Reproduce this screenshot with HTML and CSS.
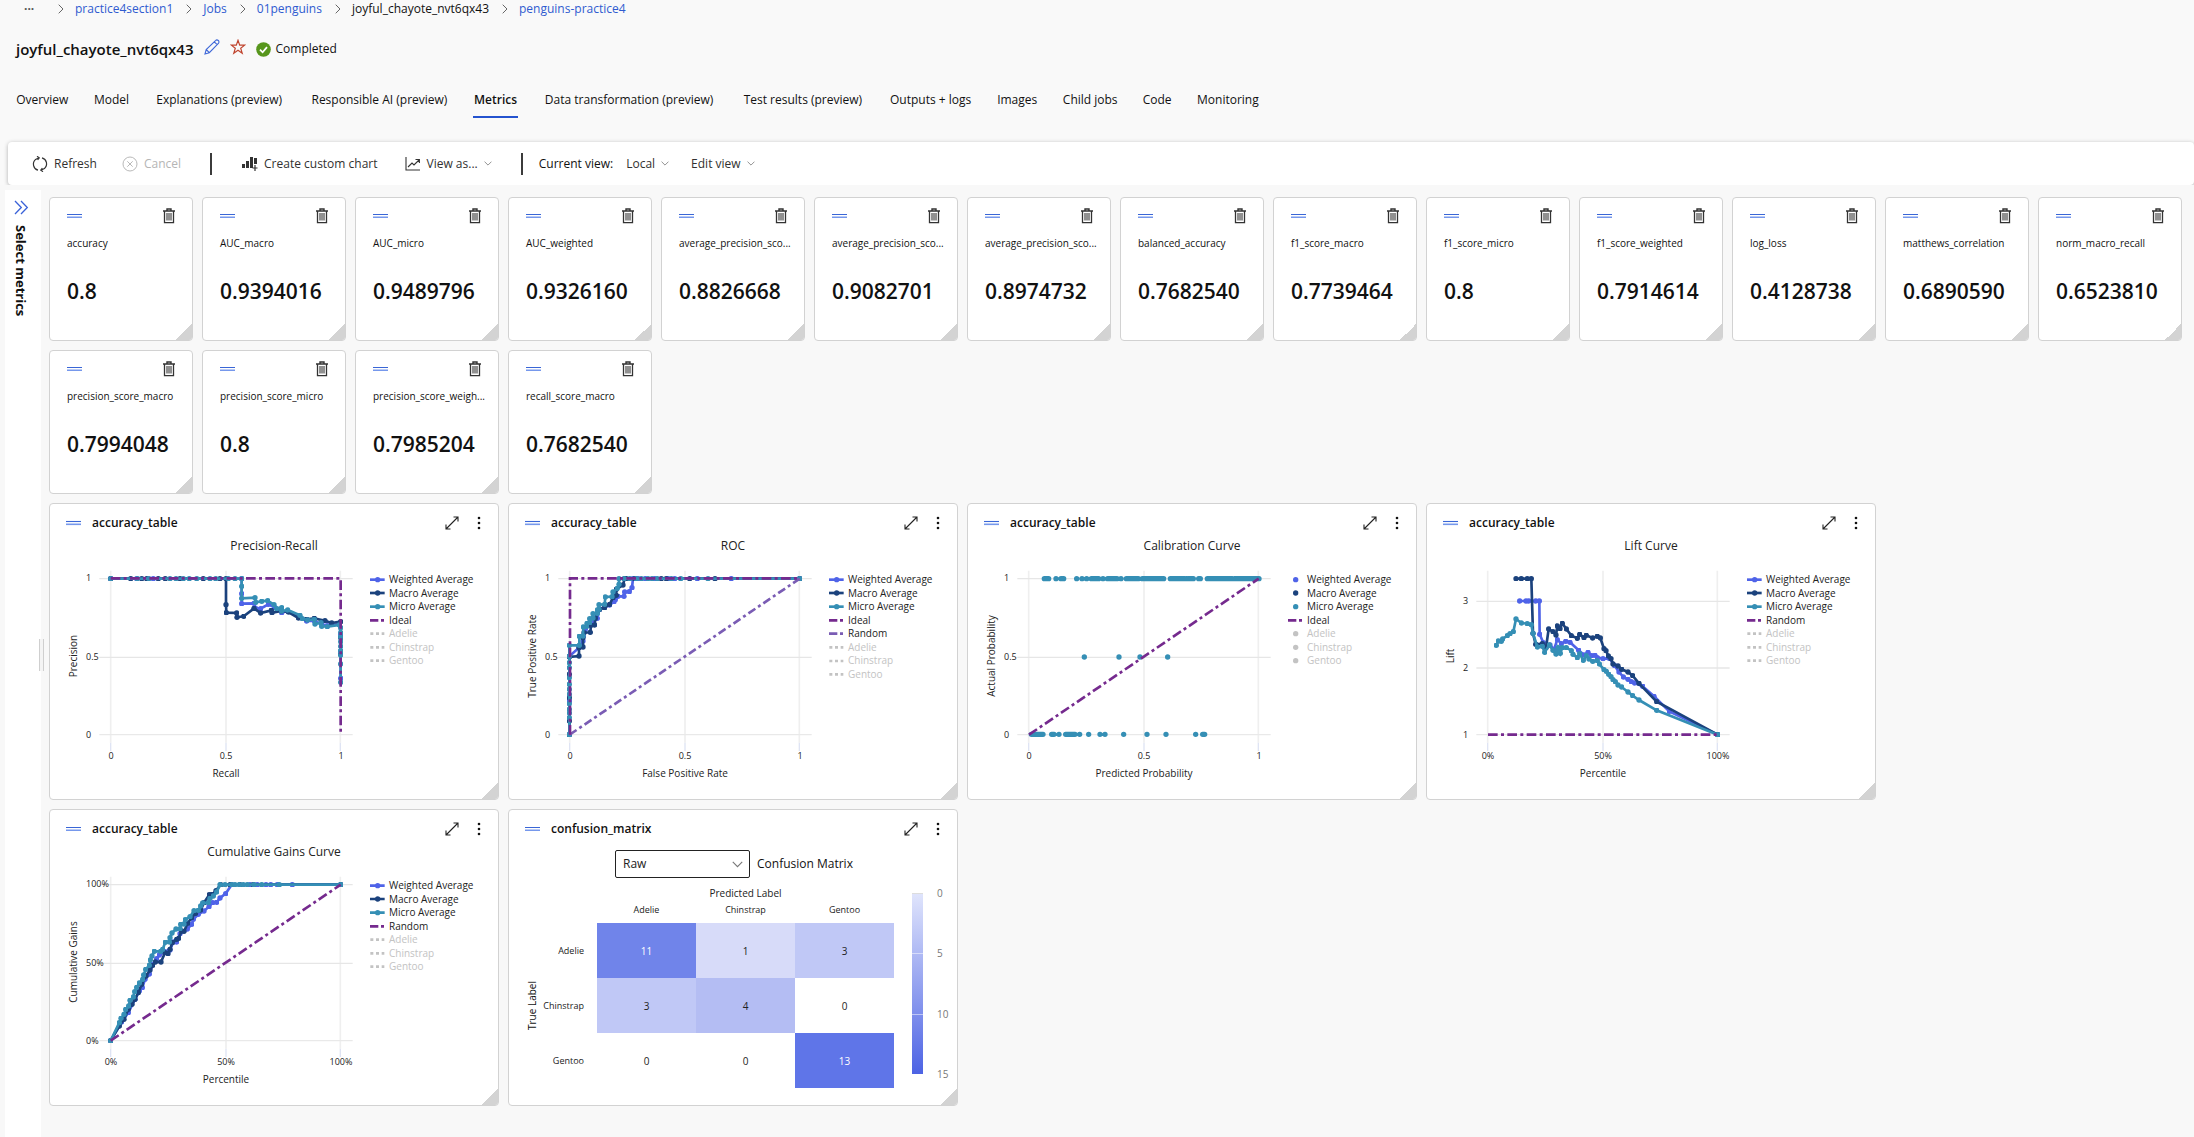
FILE: index.html
```html
<!DOCTYPE html>
<html lang="en">
<head>
<meta charset="utf-8">
<title>joyful_chayote_nvt6qx43 - Metrics</title>
<link rel="stylesheet" href="styles.css">
</head>
<body>
<svg class="defs" aria-hidden="true">
  <defs>
    <marker id="dot-weighted" viewBox="-8 -8 16 16" markerWidth="16" markerHeight="16" markerUnits="userSpaceOnUse"><circle r="8" fill="#4f63e8"/></marker>
    <marker id="dot-macro" viewBox="-8 -8 16 16" markerWidth="16" markerHeight="16" markerUnits="userSpaceOnUse"><circle r="8" fill="#1b427d"/></marker>
    <marker id="dot-micro" viewBox="-8 -8 16 16" markerWidth="16" markerHeight="16" markerUnits="userSpaceOnUse"><circle r="8" fill="#358fb5"/></marker>
    <symbol id="handle" viewBox="0 0 15 6"><path d="M0 1.500h15" stroke="#3a66d6" stroke-width="1.100"/><path d="M0 4.300h15" stroke="#7698ec" stroke-width="1.600"/></symbol>
    <symbol id="trash" viewBox="0 0 12 16"><path d="M0 3h12M4 2.6V1h4v1.6" fill="none" stroke="#333" stroke-width="1.4"/><path d="M1.5 3v11.6h9V3" fill="none" stroke="#333" stroke-width="1.3"/><path d="M4 5v7.5M6 5v7.5M8 5v7.5" stroke="#222" stroke-width="1"/></symbol>
    <symbol id="expand" viewBox="0 0 14 14"><path d="M1 13L13 1M8.5 1H13v4.500M5.500 13H1V8.500" fill="none" stroke="#222" stroke-width="1.1"/></symbol>
    <symbol id="more" viewBox="0 0 4 14"><g fill="#111"><circle cx="2" cy="2" r="1.3"/><circle cx="2" cy="7" r="1.3"/><circle cx="2" cy="12" r="1.3"/></g></symbol>
    <symbol id="chev-right" viewBox="0 0 6 10"><path d="M.7.7L5 5 .7 9.300" fill="none" stroke="#666" stroke-width="1"/></symbol>
    <symbol id="chev-down" viewBox="0 0 10 6"><path d="M.7.7L5 5 9.300.7" fill="none" stroke="#777" stroke-width="1"/></symbol>
    <g id="grid" fill="none">
      <path d="M182 209V725M528 209V725M871 209V725" stroke="#efefef" stroke-width="5"/>
      <path d="M182 725v25M528 725v25M871 725v25" stroke="#dfe4f4" stroke-width="4"/>
      <path d="M148 701H908" stroke="#e9e9e9" stroke-width="4"/>
    </g>
    <g id="rows-half"><path d="M148 233H908M148 469H908" stroke="#e6e6e6" stroke-width="4"/></g>
    <g id="key-lines">
      <path d="M960 236h44" stroke="#4f63e8" stroke-width="8"/><circle cx="983" cy="236" r="8" fill="#4f63e8"/>
      <path d="M960 276h44" stroke="#1b427d" stroke-width="8"/><circle cx="983" cy="276" r="8" fill="#1b427d"/>
      <path d="M960 317h44" stroke="#358fb5" stroke-width="8"/><circle cx="983" cy="317" r="8" fill="#358fb5"/>
      <path d="M960 358h42" stroke="#752a8e" stroke-width="8" stroke-dasharray="25 8 9 8"/>
    </g>
    <g id="key-off"><path d="M961 398h42M961 439h42M961 479h42" stroke="#c3c3c3" stroke-width="8" stroke-dasharray="9 8"/></g>
  </defs>
</svg>

<header class="top">
  <nav aria-label="Breadcrumb">
    <ol class="crumbs">
      <li><button class="dots" aria-label="More">···</button></li>
      <li><svg class="sep"><use href="#chev-right"/></svg><a href="#">practice4section1</a></li>
      <li><svg class="sep"><use href="#chev-right"/></svg><a href="#">Jobs</a></li>
      <li><svg class="sep"><use href="#chev-right"/></svg><a href="#">01penguins</a></li>
      <li><svg class="sep"><use href="#chev-right"/></svg><span>joyful_chayote_nvt6qx43</span></li>
      <li><svg class="sep"><use href="#chev-right"/></svg><a href="#">penguins-practice4</a></li>
    </ol>
  </nav>
  <div class="heading">
    <h1>joyful_chayote_nvt6qx43</h1>
    <button class="icon-btn" aria-label="Edit name"><svg width="16" height="16" viewBox="0 0 16 16" fill="none" stroke="#3f68d8" stroke-width="1.1"><path d="M1 15l1.200-4.500L11.500 1.600a1.900 1.900 0 0 1 2.900 2.700L5.300 13.700zM10.300 2.800l2.900 2.800M2.200 10.500l3.100 3.200"/></svg></button>
    <button class="icon-btn" aria-label="Favorite"><svg width="16" height="16" viewBox="0 0 16 16" fill="none" stroke="#c0452f" stroke-width="1.200"><path d="M8 1.300l1.700 4.800h5l-4 3.100 1.500 5L8 11.200l-4.200 3 1.500-5-4-3.100h5z"/></svg></button>
    <span class="status"><svg width="15" height="15" viewBox="0 0 15 15"><circle cx="7.500" cy="7.500" r="7.300" fill="#57961c"/><path d="M4 7.700l2.600 2.600L11 5.200" fill="none" stroke="#fff" stroke-width="1.800"/></svg>Completed</span>
  </div>
  <nav class="tabs" aria-label="Job sections">
    <a href="#" data-label="Overview">Overview</a>
    <a href="#" data-label="Model">Model</a>
    <a href="#" data-label="Explanations (preview)">Explanations (preview)</a>
    <a href="#" data-label="Responsible AI (preview)">Responsible AI (preview)</a>
    <a href="#" data-label="Metrics" class="current" aria-current="page">Metrics</a>
    <a href="#" data-label="Data transformation (preview)">Data transformation (preview)</a>
    <a href="#" data-label="Test results (preview)">Test results (preview)</a>
    <a href="#" data-label="Outputs + logs">Outputs + logs</a>
    <a href="#" data-label="Images">Images</a>
    <a href="#" data-label="Child jobs">Child jobs</a>
    <a href="#" data-label="Code">Code</a>
    <a href="#" data-label="Monitoring">Monitoring</a>
  </nav>
</header>

<div class="toolbar" role="toolbar" aria-label="Metrics commands">
  <button class="cmd refresh"><svg width="16" height="16" viewBox="0 0 16 16" fill="none" stroke="#333" stroke-width="1.200"><path d="M6 14.200A6.300 6.300 0 0 1 3.600 3.400L7 1.800M10 1.800a6.300 6.300 0 0 1 2.400 10.800L9 14.200"/><path d="M5 .3l2.200 1.500L5.600 4M11 15.700l-2.200-1.500 1.600-2.200"/></svg>Refresh</button>
  <button class="cmd cancel" disabled><svg width="16" height="16" viewBox="0 0 16 16" fill="none" stroke="#b9b9b9" stroke-width="1"><circle cx="8" cy="8" r="7"/><path d="M5.300 5.300l5.400 5.400M10.700 5.300l-5.400 5.400"/></svg>Cancel</button>
  <span class="rule"></span>
  <button class="cmd create"><svg width="16" height="16" viewBox="0 0 16 16"><path d="M0 8h3v4H0zM4 5h3v7H4zM8 1h3v11H8zM12 2h3v6h-3z" fill="#333"/><path d="M13 9v6M10.500 12h5" stroke="#333" stroke-width="1.200"/></svg>Create custom chart</button>
  <button class="cmd view-as"><svg width="16" height="16" viewBox="0 0 16 16" fill="none" stroke="#333" stroke-width="1.100"><path d="M1 1v13h14M3 11l4-4 2 2 5-5M10.500 3.500H14.400V7"/></svg>View as...<svg class="down"><use href="#chev-down"/></svg></button>
  <span class="rule"></span>
  <span class="current-view">Current view:</span>
  <button class="cmd local">Local<svg class="down"><use href="#chev-down"/></svg></button>
  <button class="cmd">Edit view<svg class="down"><use href="#chev-down"/></svg></button>
</div>

<div class="body">
  <aside class="side">
    <button aria-label="Expand"><svg width="15" height="15" viewBox="0 0 15 15" fill="none" stroke="#3a62d8" stroke-width="1.300"><path d="M1 1l6.300 6.500L1 14M7 1l6.300 6.500L7 14"/></svg></button>
    <h2>Select metrics</h2>
    <span class="grip"></span>
  </aside>
  <main>
    <section class="grid" aria-label="Metric values">
      <article class="card metric"><div class="bar"><svg class="handle"><use href="#handle"/></svg><button aria-label="Delete"><svg class="trash"><use href="#trash"/></svg></button></div><h3>accuracy</h3><p>0.8</p></article>
      <article class="card metric"><div class="bar"><svg class="handle"><use href="#handle"/></svg><button aria-label="Delete"><svg class="trash"><use href="#trash"/></svg></button></div><h3>AUC_macro</h3><p>0.9394016</p></article>
      <article class="card metric"><div class="bar"><svg class="handle"><use href="#handle"/></svg><button aria-label="Delete"><svg class="trash"><use href="#trash"/></svg></button></div><h3>AUC_micro</h3><p>0.9489796</p></article>
      <article class="card metric"><div class="bar"><svg class="handle"><use href="#handle"/></svg><button aria-label="Delete"><svg class="trash"><use href="#trash"/></svg></button></div><h3>AUC_weighted</h3><p>0.9326160</p></article>
      <article class="card metric"><div class="bar"><svg class="handle"><use href="#handle"/></svg><button aria-label="Delete"><svg class="trash"><use href="#trash"/></svg></button></div><h3>average_precision_sco...</h3><p>0.8826668</p></article>
      <article class="card metric"><div class="bar"><svg class="handle"><use href="#handle"/></svg><button aria-label="Delete"><svg class="trash"><use href="#trash"/></svg></button></div><h3>average_precision_sco...</h3><p>0.9082701</p></article>
      <article class="card metric"><div class="bar"><svg class="handle"><use href="#handle"/></svg><button aria-label="Delete"><svg class="trash"><use href="#trash"/></svg></button></div><h3>average_precision_sco...</h3><p>0.8974732</p></article>
      <article class="card metric"><div class="bar"><svg class="handle"><use href="#handle"/></svg><button aria-label="Delete"><svg class="trash"><use href="#trash"/></svg></button></div><h3>balanced_accuracy</h3><p>0.7682540</p></article>
      <article class="card metric"><div class="bar"><svg class="handle"><use href="#handle"/></svg><button aria-label="Delete"><svg class="trash"><use href="#trash"/></svg></button></div><h3>f1_score_macro</h3><p>0.7739464</p></article>
      <article class="card metric"><div class="bar"><svg class="handle"><use href="#handle"/></svg><button aria-label="Delete"><svg class="trash"><use href="#trash"/></svg></button></div><h3>f1_score_micro</h3><p>0.8</p></article>
      <article class="card metric"><div class="bar"><svg class="handle"><use href="#handle"/></svg><button aria-label="Delete"><svg class="trash"><use href="#trash"/></svg></button></div><h3>f1_score_weighted</h3><p>0.7914614</p></article>
      <article class="card metric"><div class="bar"><svg class="handle"><use href="#handle"/></svg><button aria-label="Delete"><svg class="trash"><use href="#trash"/></svg></button></div><h3>log_loss</h3><p>0.4128738</p></article>
      <article class="card metric"><div class="bar"><svg class="handle"><use href="#handle"/></svg><button aria-label="Delete"><svg class="trash"><use href="#trash"/></svg></button></div><h3>matthews_correlation</h3><p>0.6890590</p></article>
      <article class="card metric"><div class="bar"><svg class="handle"><use href="#handle"/></svg><button aria-label="Delete"><svg class="trash"><use href="#trash"/></svg></button></div><h3>norm_macro_recall</h3><p>0.6523810</p></article>
      <article class="card metric"><div class="bar"><svg class="handle"><use href="#handle"/></svg><button aria-label="Delete"><svg class="trash"><use href="#trash"/></svg></button></div><h3>precision_score_macro</h3><p>0.7994048</p></article>
      <article class="card metric"><div class="bar"><svg class="handle"><use href="#handle"/></svg><button aria-label="Delete"><svg class="trash"><use href="#trash"/></svg></button></div><h3>precision_score_micro</h3><p>0.8</p></article>
      <article class="card metric"><div class="bar"><svg class="handle"><use href="#handle"/></svg><button aria-label="Delete"><svg class="trash"><use href="#trash"/></svg></button></div><h3>precision_score_weigh...</h3><p>0.7985204</p></article>
      <article class="card metric"><div class="bar"><svg class="handle"><use href="#handle"/></svg><button aria-label="Delete"><svg class="trash"><use href="#trash"/></svg></button></div><h3>recall_score_macro</h3><p>0.7682540</p></article>
    </section>

    <section class="grid" aria-label="Charts">
      <article class="card chart">
        <div class="bar"><svg class="handle"><use href="#handle"/></svg><h3>accuracy_table</h3><button aria-label="Expand chart"><svg class="expand"><use href="#expand"/></svg></button><button aria-label="More options"><svg class="more"><use href="#more"/></svg></button></div>
        <svg class="plot" viewBox="0 0 448 262" role="img" aria-label="Precision-Recall">
          <text class="t" x="224" y="13">Precision-Recall</text>
          <svg width="448" height="262" viewBox="0 108 1344 786" fill="none" stroke-width="8">
            <use href="#grid"/><use href="#rows-half"/><use href="#key-lines"/><use href="#key-off"/>
            <polyline class="weighted" points="182,233 260,233 310,233 575,233 575,278 575,308 612,307 618,323 632,323 655,310 675,320 695,335 713,330 750,350 770,360 793,360 815,370 832,374 868,370 872,400 872,450 872,532"/>
            <polyline class="macro" points="182,233 242,233 275,233 290,233 325,233 346,233 390,233 460,233 510,233 528,233 528,311 529,335 560,336 561,349 581,346 612,322 632,336 664,328 666,335 695,330 715,333 745,351 770,355 793,352 825,359 845,366 872,362 872,410 872,460"/>
            <polyline class="micro" points="182,233 262,233 297,233 360,233 378,233 400,233 418,233 440,233 480,233 497,233 535,233 555,233 575,233 575,256 575,292 615,290 617,304 635,301 653,299 672,311 680,323 695,320 695,330 713,327 750,343 757,353 773,357 793,355 795,369 813,365 815,376 832,377 868,372 872,380 872,395 872,408 872,422 872,436 872,450 872,462 872,489 872,544"/>
            <path class="ideal" d="M182 232H872V701"/>
          </svg>
          <g class="k"><text x="339" y="46">Weighted Average</text><text x="339" y="60">Macro Average</text><text x="339" y="73">Micro Average</text><text x="339" y="87">Ideal</text></g>
          <g class="k off"><text x="339" y="100">Adelie</text><text x="339" y="114">Chinstrap</text><text x="339" y="127">Gentoo</text></g>
          <g class="y"><text x="36" y="44">1</text><text x="36" y="123">0.5</text><text x="36" y="201">0</text></g>
          <g class="x"><text x="61" y="222">0</text><text x="176" y="222">0.5</text><text x="291" y="222">1</text></g>
          <text class="a" x="176" y="240">Recall</text>
          <text class="a" transform="translate(27 119) rotate(-90)">Precision</text>
        </svg>
      </article>

      <article class="card chart">
        <div class="bar"><svg class="handle"><use href="#handle"/></svg><h3>accuracy_table</h3><button aria-label="Expand chart"><svg class="expand"><use href="#expand"/></svg></button><button aria-label="More options"><svg class="more"><use href="#more"/></svg></button></div>
        <svg class="plot" viewBox="0 0 448 262" role="img" aria-label="ROC">
          <text class="t" x="224" y="13">ROC</text>
          <svg width="448" height="262" viewBox="0 108 1344 786" fill="none" stroke-width="8">
            <use href="#grid"/><use href="#rows-half"/><use href="#key-lines"/>
            <path d="M960 398h42" stroke="#7a5cb4" stroke-dasharray="25 8 9 8"/>
            <g transform="translate(0 41)"><use href="#key-off"/></g>
            <g transform="translate(-3 0)">
              <polyline class="weighted" points="184,701 184,600 184,466 213,440 225,420 226,405 232,385 245,372 250,362 268,352 268,338 275,325 290,318 305,312 318,302 322,296 330,286 348,286 350,273 364,272 372,260 375,233 390,233 412,233 440,233 480,233 500,233 568,233 670,233 875,233"/>
              <polyline class="macro" points="184,701 184,660 184,590 184,520 184,468 213,465 213,440 225,438 225,410 228,395 247,394 249,373 260,372 262,352 275,325 290,320 305,310 315,290 325,283 325,265 345,252 350,233 355,233 380,233 460,233 475,233 545,233 621,233 875,233"/>
              <polyline class="micro" points="184,701 184,650 184,636 184,625 184,608 184,580 184,565 184,550 184,530 184,500 184,485 184,466 184,433 214,433 214,406 225,405 226,378 236,376 237,367 245,365 245,353 255,351 255,338 268,337 268,327 273,325 273,311 290,310 292,288 312,287 315,273 328,262 333,250 333,233 348,233 365,233 385,233 400,233 420,233 432,233 448,233 490,233 518,233 600,233 875,233"/>
              <path d="M185 701L875 233" stroke="#7a5cb4" stroke-dasharray="25 10 9 10"/>
              <path class="ideal" d="M186 701V232H875"/>
            </g>
          </svg>
          <g class="k"><text x="339" y="46">Weighted Average</text><text x="339" y="60">Macro Average</text><text x="339" y="73">Micro Average</text><text x="339" y="87">Ideal</text><text x="339" y="100">Random</text></g>
          <g class="k off"><text x="339" y="114">Adelie</text><text x="339" y="127">Chinstrap</text><text x="339" y="141">Gentoo</text></g>
          <g class="y"><text x="36" y="44">1</text><text x="36" y="123">0.5</text><text x="36" y="201">0</text></g>
          <g class="x"><text x="61" y="222">0</text><text x="176" y="222">0.5</text><text x="291" y="222">1</text></g>
          <text class="a" x="176" y="240">False Positive Rate</text>
          <text class="a" transform="translate(27 119) rotate(-90)">True Positive Rate</text>
        </svg>
      </article>

      <article class="card chart">
        <div class="bar"><svg class="handle"><use href="#handle"/></svg><h3>accuracy_table</h3><button aria-label="Expand chart"><svg class="expand"><use href="#expand"/></svg></button><button aria-label="More options"><svg class="more"><use href="#more"/></svg></button></div>
        <svg class="plot" viewBox="0 0 448 262" role="img" aria-label="Calibration Curve">
          <text class="t" x="224" y="13">Calibration Curve</text>
          <svg width="448" height="262" viewBox="0 108 1344 786" fill="none" stroke-width="8">
            <use href="#grid"/><use href="#rows-half"/>
            <circle cx="983" cy="236" r="8" fill="#4f63e8"/><circle cx="983" cy="276" r="8" fill="#1b427d"/><circle cx="983" cy="317" r="8" fill="#358fb5"/>
            <path d="M960 358h42" stroke="#752a8e" stroke-dasharray="25 8 9 8"/>
            <g fill="#c3c3c3"><circle cx="983" cy="398" r="8"/><circle cx="983" cy="439" r="8"/><circle cx="983" cy="479" r="8"/></g>
            <g transform="translate(-9 0)">
              <path class="scatter" d="M238 233h13M273 233h0M288 233h8M335 233h0M351 233h0M365 233h0M379 233h22M414 233h0M428 233h28M468 233h0M484 233h36M532 233h16M555 233h41M616 233h44M668 233h17M701 233h5M727 233h28M762 233h40M808 233h40M855 233h27M358 468h0M462 468h0M525 468h0M608 468h0M199 700h35M260 700h7M282 700h0M302 700h28M344 700h0M371 700h0M405 700h0M420 700h0M476 700h0M546 700h0M603 700h0M692 700h0M713 700h6"/>
              <path class="ideal" d="M192 701L881 233"/>
            </g>
          </svg>
          <g class="k"><text x="339" y="46">Weighted Average</text><text x="339" y="60">Macro Average</text><text x="339" y="73">Micro Average</text><text x="339" y="87">Ideal</text></g>
          <g class="k off"><text x="339" y="100">Adelie</text><text x="339" y="114">Chinstrap</text><text x="339" y="127">Gentoo</text></g>
          <g class="y"><text x="36" y="44">1</text><text x="36" y="123">0.5</text><text x="36" y="201">0</text></g>
          <g class="x"><text x="61" y="222">0</text><text x="176" y="222">0.5</text><text x="291" y="222">1</text></g>
          <text class="a" x="176" y="240">Predicted Probability</text>
          <text class="a" transform="translate(27 119) rotate(-90)">Actual Probability</text>
        </svg>
      </article>

      <article class="card chart">
        <div class="bar"><svg class="handle"><use href="#handle"/></svg><h3>accuracy_table</h3><button aria-label="Expand chart"><svg class="expand"><use href="#expand"/></svg></button><button aria-label="More options"><svg class="more"><use href="#more"/></svg></button></div>
        <svg class="plot" viewBox="0 0 448 262" role="img" aria-label="Lift Curve">
          <text class="t" x="224" y="13">Lift Curve</text>
          <svg width="448" height="262" viewBox="0 108 1344 786" fill="none" stroke-width="8">
            <use href="#grid"/><path d="M148 301H908M148 501H908" stroke="#e6e6e6" stroke-width="4"/><use href="#key-lines"/><use href="#key-off"/>
            <g transform="translate(-9 0)">
              <polyline class="weighted" points="287,300 306,300 314,300 335,300 346,300 347,400 358,425 365,440 378,432 390,445 400,416 412,428 425,421 438,424 464,448 480,462 492,454 503,464 513,463 520,470 537,473 556,472 572,494 585,513 598,528 612,535 622,542 632,546 656,556 690,586 736,631 881,701"/>
              <polyline class="macro" points="276,233 292,233 310,233 322,233 327,397 335,430 355,428 366,440 374,384 387,392 396,402 400,375 408,383 415,367 427,384 442,404 460,412 467,400 480,410 487,403 506,411 520,406 529,411 540,443 546,449 553,465 561,473 567,489 582,495 593,505 612,513 626,524 645,547 698,602 881,701"/>
              <polyline class="micro" points="217,433 223,420 232,421 236,414 250,404 258,398 268,392 276,354 292,366 310,368 322,371 327,397 340,438 355,436 362,454 376,432 387,448 396,459 402,440 409,457 415,440 427,440 442,449 447,460 460,470 467,458 478,478 487,464 495,474 506,481 520,479 526,489 540,506 547,511 554,520 561,527 567,536 574,542 582,552 593,558 612,573 626,584 645,597 698,628 881,701"/>
              <path class="ideal" d="M192 701H881"/>
            </g>
          </svg>
          <g class="k"><text x="339" y="46">Weighted Average</text><text x="339" y="60">Macro Average</text><text x="339" y="73">Micro Average</text><text x="339" y="87">Random</text></g>
          <g class="k off"><text x="339" y="100">Adelie</text><text x="339" y="114">Chinstrap</text><text x="339" y="127">Gentoo</text></g>
          <g class="y"><text x="36" y="67">3</text><text x="36" y="134">2</text><text x="36" y="201">1</text></g>
          <g class="x"><text x="61" y="222">0%</text><text x="176" y="222">50%</text><text x="291" y="222">100%</text></g>
          <text class="a" x="176" y="240">Percentile</text>
          <text class="a" transform="translate(27 119) rotate(-90)">Lift</text>
        </svg>
      </article>

      <article class="card chart">
        <div class="bar"><svg class="handle"><use href="#handle"/></svg><h3>accuracy_table</h3><button aria-label="Expand chart"><svg class="expand"><use href="#expand"/></svg></button><button aria-label="More options"><svg class="more"><use href="#more"/></svg></button></div>
        <svg class="plot" viewBox="0 0 448 262" role="img" aria-label="Cumulative Gains Curve">
          <text class="t" x="224" y="13">Cumulative Gains Curve</text>
          <svg width="448" height="262" viewBox="0 108 1344 786" fill="none" stroke-width="8">
            <use href="#grid"/><use href="#rows-half"/><use href="#key-lines"/><use href="#key-off"/>
            <g transform="translate(0 -3)">
              <polyline class="weighted" points="182,704 215,648 235,620 255,580 268,555 277,545 285,520 298,504 308,475 320,458 328,447 345,437 360,432 370,408 380,408 390,383 412,369 425,355 430,340 445,325 462,315 477,302 488,290 500,289 510,276 527,263 545,236 600,236 622,236 648,236 662,236 682,236 727,236 872,236"/>
              <polyline class="macro" points="182,704 208,660 222,640 235,610 246,595 255,580 265,560 275,535 288,510 300,492 308,478 316,468 333,468 345,440 354,443 360,430 367,410 380,400 386,397 395,375 402,376 413,352 425,335 437,322 452,312 462,290 478,266 487,265 498,254 512,236 540,236 570,236 610,236 872,236"/>
              <polyline class="micro" points="182,704 208,650 213,637 222,625 227,610 236,600 240,583 250,573 254,557 260,544 268,531 278,520 281,507 287,490 298,478 301,462 306,450 313,436 332,436 338,430 346,409 358,408 360,395 366,381 378,369 390,368 392,355 402,354 406,341 420,332 432,314 445,313 452,300 458,291 475,290 480,277 490,270 500,258 510,236 525,236 545,236 555,236 568,236 580,236 592,236 612,236 635,236 688,236 872,236"/>
              <path class="ideal" d="M182 704L872 236"/>
            </g>
          </svg>
          <g class="k"><text x="339" y="46">Weighted Average</text><text x="339" y="60">Macro Average</text><text x="339" y="73">Micro Average</text><text x="339" y="87">Random</text></g>
          <g class="k off"><text x="339" y="100">Adelie</text><text x="339" y="114">Chinstrap</text><text x="339" y="127">Gentoo</text></g>
          <g class="y"><text x="36" y="44">100%</text><text x="36" y="123">50%</text><text x="36" y="201">0%</text></g>
          <g class="x"><text x="61" y="222">0%</text><text x="176" y="222">50%</text><text x="291" y="222">100%</text></g>
          <text class="a" x="176" y="240">Percentile</text>
          <text class="a" transform="translate(27 119) rotate(-90)">Cumulative Gains</text>
        </svg>
      </article>

      <article class="card chart">
        <div class="bar"><svg class="handle"><use href="#handle"/></svg><h3>confusion_matrix</h3><button aria-label="Expand chart"><svg class="expand"><use href="#expand"/></svg></button><button aria-label="More options"><svg class="more"><use href="#more"/></svg></button></div>
        <div class="cm-head">
          <div class="select"><select id="norm"><option>Raw</option><option>Normalized</option></select><svg class="down"><use href="#chev-down"/></svg></div>
          <label for="norm">Confusion Matrix</label>
        </div>
        <div class="cm-body">
          <div class="true-label"><span>True Label</span></div>
          <table>
            <thead>
              <tr class="axis"><td></td><th colspan="3">Predicted Label</th></tr>
              <tr class="names"><td></td><th>Adelie</th><th>Chinstrap</th><th>Gentoo</th></tr>
            </thead>
            <tbody>
              <tr><th>Adelie</th><td class="v11">11</td><td class="v1">1</td><td class="v3">3</td></tr>
              <tr><th>Chinstrap</th><td class="v3">3</td><td class="v4">4</td><td>0</td></tr>
              <tr><th>Gentoo</th><td>0</td><td>0</td><td class="v13">13</td></tr>
            </tbody>
          </table>
          <div class="scale"><span class="ramp"><i></i><i></i><i></i></span><ol><li>0</li><li>5</li><li>10</li><li>15</li></ol></div>
        </div>
      </article>
    </section>
  </main>
</div>
</body>
</html>
```
FILE: styles.css
```css
* { box-sizing: border-box; }
html, body { height: 100%; }
body {
  margin: 0;
  display: flex;
  flex-direction: column;
  background: #f9f9f9;
  color: #111;
  font: 12px/16px "Open Sans", "Noto Sans", sans-serif;
}
button {
  display: inline-flex;
  align-items: center;
  padding: 0;
  border: 0;
  background: none;
  color: inherit;
  font: inherit;
  cursor: pointer;
}
h1, h2, h3, p, ol { margin: 0; padding: 0; }
ol { list-style: none; }
a { color: #2f5bd0; text-decoration: none; }
svg { display: block; flex: none; }
.defs { position: absolute; width: 0; height: 0; }

/* page header */
.top { padding: 1px 16px 0; }
.crumbs { display: flex; gap: 13px; padding-left: 8px; }
.crumbs li { display: flex; align-items: center; gap: 11px; }
.crumbs .dots { width: 21px; font-weight: 700; color: #555; }
.sep { width: 6px; height: 10px; }
.heading { display: flex; align-items: center; gap: 10px; height: 24px; margin-top: 20px; }
.heading h1 { font-size: 15px; line-height: 24px; font-weight: 600; }
.icon-btn { margin-bottom: 4px; }
.status { display: flex; align-items: center; gap: 5px; }
.tabs { display: flex; gap: 22px; margin: 31px 0 0 -2px; }
.tabs a {
  display: grid;
  justify-items: center;
  height: 26px;
  padding: 0 1px;
  color: #111;
}
.tabs a::after {
  content: attr(data-label);
  height: 0;
  font-weight: 600;
  overflow: hidden;
  visibility: hidden;
}
.tabs .current { font-weight: 600; border-bottom: 2px solid #2453cf; }

/* command bar */
.toolbar {
  display: flex;
  align-items: center;
  height: 43px;
  margin: 24px 0 0 8px;
  padding-left: 24px;
  border-radius: 4px;
  background: #fff;
  box-shadow: 0 1px 4px rgba(0, 0, 0, .3);
}
.cmd { gap: 6px; margin-right: 25px; color: #323130; font-weight: 500; }
.cmd.cancel { margin-right: 29px; color: #b5b5b5; }
.cmd.create { margin-right: 27px; }
.cmd.local { margin-right: 22px; }
.view-as { margin-right: 29px; }
.down { width: 8px; height: 5px; }
.rule { width: 2px; height: 22px; margin-right: 30px; background: #3b3b3b; }
.rule ~ .rule { margin-right: 16px; }
.current-view { margin-right: 13px; }

/* work area */
.body { display: flex; flex: 1; gap: 8px; padding: 5px 12px 0 5px; background: #f8f8f8; }
.side {
  position: relative;
  display: flex;
  flex-direction: column;
  align-items: center;
  width: 36px;
  flex: none;
  padding: 10px 4px 0 0;
  background: #fff;
}
.side h2 { margin-top: 10px; font-size: 13px; line-height: 18px; font-weight: 700; writing-mode: vertical-rl; }
.grip {
  position: absolute;
  right: -3px;
  top: calc(50% - 25px);
  width: 5px;
  height: 32px;
  border: solid #cfcfcf;
  border-width: 0 1px;
  background: #f4f4f4;
}
main { flex: 1; min-width: 0; display: flex; flex-direction: column; gap: 9px; padding: 7px 0 24px; }
.grid { display: grid; grid-template-columns: repeat(auto-fill, 144px); grid-auto-rows: 144px; gap: 9px; }
.card {
  position: relative;
  border: 1px solid #d2d2d2;
  border-radius: 4px;
  background: #fff;
  overflow: hidden;
}
.card::after {
  content: "";
  position: absolute;
  right: 0;
  bottom: 0;
  width: 16px;
  height: 16px;
  background: linear-gradient(135deg, transparent 50%, #d3d3d3 50%);
}
.bar { display: flex; align-items: center; }
.handle { width: 15px; height: 6px; }
.trash { width: 12px; height: 16px; }
.expand { width: 14px; height: 14px; }
.more { width: 4px; height: 14px; }

.metric { padding: 9px 17px 0; }
.metric .bar { justify-content: space-between; height: 18px; }
.metric h3 { margin-top: 11px; font-size: 10px; line-height: 14px; font-weight: 400; white-space: nowrap; }
.metric p { margin-top: 27px; font-size: 21px; line-height: 28px; font-weight: 600; }

.chart { grid-column: span 3; grid-row: span 2; }
.chart .bar { height: 33px; padding: 4px 17px 0 16px; gap: 18px; }
.chart .bar h3 { flex: 1; margin-left: -7px; font-size: 12px; line-height: 16px; font-weight: 600; }

/* plots */
.plot { width: 100%; height: auto; }
.plot text { fill: #222; font-size: 10px; }
.plot .t { font-size: 12px; text-anchor: middle; }
.plot .a { text-anchor: middle; }
.plot .x text { font-size: 9px; text-anchor: middle; }
.plot .y text { font-size: 9px; }
.plot .off text { fill: #c3c3c3; }
.weighted { stroke: #4f63e8; marker: url(#dot-weighted); }
.macro { stroke: #1b427d; marker: url(#dot-macro); }
.micro { stroke: #358fb5; marker: url(#dot-micro); }
.ideal { stroke: #752a8e; stroke-dasharray: 29 10 9 10; }
.scatter { stroke: #358fb5; stroke-width: 16; stroke-linecap: round; }

/* confusion matrix */
.cm-head { display: flex; align-items: center; gap: 7px; height: 28px; margin-top: 7px; padding-left: 106px; }
.select { display: grid; align-items: center; width: 135px; height: 28px; }
.select > * { grid-area: 1 / 1; }
.select select {
  width: 100%;
  height: 100%;
  padding: 0 7px;
  border: 1px solid #222;
  border-radius: 2px;
  background: #fff;
  color: #222;
  font: inherit;
  appearance: none;
}
.select .down { width: 11px; height: 7px; justify-self: end; margin-right: 7px; pointer-events: none; }
.cm-body { display: flex; padding-top: 4px; }
.true-label { display: flex; align-items: center; width: 30px; padding: 40px 0 0 15px; font-size: 10px; }
.true-label span { writing-mode: vertical-rl; transform: rotate(180deg); }
table { border-collapse: collapse; table-layout: fixed; width: 355px; color: #222; }
thead td { width: 58px; }
th, td { padding: 0; font-weight: 400; text-align: center; }
.axis th { height: 22px; font-size: 10px; }
.names th { height: 19px; font-size: 9px; line-height: 12px; vertical-align: top; }
tbody td { height: 55px; font-size: 10px; }
tbody th { padding-right: 13px; text-align: right; font-size: 9px; }
.v1 { background: #d7dbf9; }
.v3 { background: #c0c8f6; }
.v4 { background: #b4bdf3; }
.v11 { background: #7084ea; color: #fff; }
.v13 { background: #5f75e8; color: #fff; }
.scale { display: flex; gap: 14px; height: 181px; margin: 11px 0 0 18px; font-size: 10px; color: #777; }
.ramp { display: flex; flex-direction: column; width: 11px; border-top: 1px solid #ddd; background: linear-gradient(#dfe4fc, #4d63e4); }
.ramp i { flex: 1; }
.ramp i + i { border-top: 1px solid rgba(255, 255, 255, .5); }
.scale ol { display: flex; flex-direction: column; justify-content: space-between; margin: -8px 0; }
```
